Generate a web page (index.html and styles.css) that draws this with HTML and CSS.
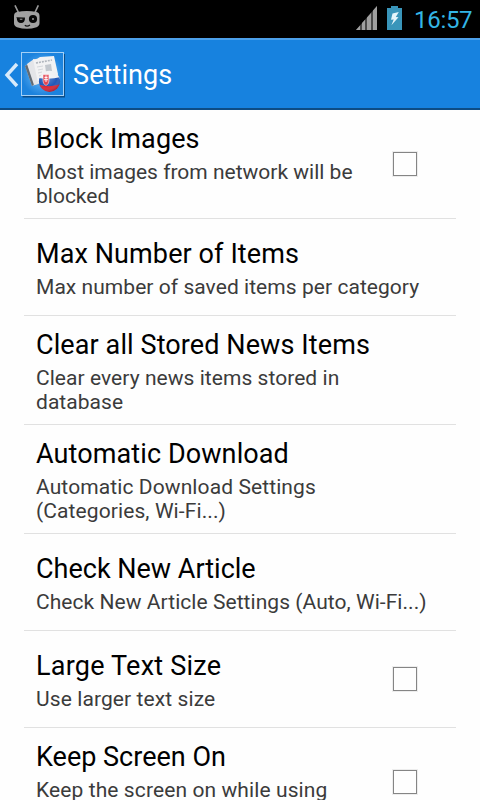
FILE: index.html
```html
<!DOCTYPE html>
<html lang="en">
<head>
<meta charset="utf-8">
<title>Settings</title>
<link rel="stylesheet" href="styles.css">
</head>
<body>
<div class="screen">
  <header class="status">
    <svg class="cid" width="28" height="26" viewBox="0 0 28 26">
      <path d="M2.3 1 5.2 7M25 1 22.2 7" stroke="#999" stroke-width="1.7" stroke-linecap="round"/>
      <path d="M4 7Q14 5 23.5 7Q26.5 7.5 26.5 11V18Q26.5 21 23.5 22.2Q14 25.5 4 22.2Q1 21 1 18V11Q1 7.5 4 7Z" fill="#a2a2a2"/>
      <path d="M3.8 13H12Q12 18 8 18Q3.8 18 3.8 13Z" fill="#080808"/>
      <path d="M3.5 12.6 12 13" stroke="#222" stroke-width="1"/>
      <path d="M6.8 14.3H9.4" stroke="#888" stroke-width="1.2"/>
      <circle cx="20" cy="14" r="4.1" fill="#080808"/>
      <circle cx="20" cy="14" r="1" fill="#999"/>
      <path d="M11.8 20.2Q14 22 17 20" stroke="#111" stroke-width="1.3" fill="none"/>
    </svg>
    <div class="indicators">
      <svg width="22" height="24" viewBox="0 0 22 24">
        <path d="M0 24 21 0V24Z" fill="#4a4a4a"/>
        <path d="M0 24 4 19.4V24ZM6 24V17.1L9 13.7V24ZM11 24V11.4L15 6.9V24ZM17 24V4.6L21 0V24Z" fill="#a0a0a0"/>
      </svg>
      <svg class="battery" width="16" height="24" viewBox="0 0 16 24">
        <path d="M0 2H4V0H11V2H15V24H0Z" fill="#3995ba"/>
        <path d="M5.5 7.5 11.8 6 8.8 11 11.5 11.3 4.4 19.3 6.7 13.5 4 13.7Z" fill="#e5f5fb"/>
      </svg>
      <span class="clock">16:57</span>
    </div>
  </header>
  <nav class="bar">
    <svg class="back" width="15" height="26" viewBox="0 0 15 26"><path d="M13 2 3 13 13 24" fill="none" stroke="#d7eafb" stroke-width="3.4"/></svg>
    <svg class="app" width="48" height="50" viewBox="0 0 48 50">
      <defs>
        <radialGradient id="glow"><stop offset="0" stop-color="#7fc4f8"/><stop offset="1" stop-color="#1c83de"/></radialGradient>
        <clipPath id="ball"><circle cx="29.5" cy="31.3" r="10.6"/></clipPath>
        <radialGradient id="shine" cx=".4" cy=".3" r=".75"><stop offset="0" stop-color="#fff" stop-opacity=".3"/><stop offset=".6" stop-color="#fff" stop-opacity="0"/><stop offset="1" stop-color="#003" stop-opacity=".35"/></radialGradient>
      </defs>
      <rect x="2.5" y="4" width="42.5" height="43.5" fill="#0c4d88"/>
      <rect x="1.5" y="2.5" width="42" height="43" fill="url(#glow)" stroke="#a4d0f6"/>
      <path d="M5 16 15 9 18 34 12 36Z" fill="#c4cbd2"/>
      <path d="M5 16 8.5 14 16 33 12 36Z" fill="#626b74"/>
      <path d="M7 14 14 9 22 33 14 35Z" fill="#e4e5e8"/>
      <path d="M13 9Q16 10 20 7L34 6 38 24 36 31 18 33Z" fill="#f2f2f3"/>
      <path d="M16 13 32 10" stroke="#b0b6bd" stroke-width="1.6" stroke-dasharray="2 1"/>
      <path d="M17 17 23 16M18 20 23 19M18 23 22 22M19 26 22 25" stroke="#d4d7db"/>
      <path d="M25 15 31 14 32 21 26 22Z" fill="#c2c7cd"/>
      <g clip-path="url(#ball)">
        <path d="M18 20H41V29H18Z" fill="#f0f0f3"/>
        <path d="M18 28Q30 30 41 27V34.5Q30 38 18 34.5Z" fill="#2058b8"/>
        <path d="M18 34.5Q30 38 41 34V43H18Z" fill="#db2431"/>
        <path d="M23 24.5H29V31Q29 34 26 35.5Q23 34 23 31Z" fill="#e03140" stroke="#fff" stroke-width=".5"/>
        <path d="M26 25.5V32M24.5 27.5H27.5M24 29.7H28" stroke="#fff" stroke-width=".9"/>
        <circle cx="29.5" cy="31.3" r="10.6" fill="url(#shine)"/>
      </g>
    </svg>
    <h1>Settings</h1>
  </nav>
  <main class="list">
    <section class="row tall"><div class="copy"><h2>Block Images</h2><p>Most images from network will be<br>blocked</p></div><span class="check"></span></section>
    <section class="row"><div class="copy"><h2>Max Number of Items</h2><p class="wide">Max number of saved items per category</p></div></section>
    <section class="row tall"><div class="copy"><h2>Clear all Stored News Items</h2><p class="wide">Clear every news items stored in<br>database</p></div></section>
    <section class="row tall"><div class="copy"><h2>Automatic Download</h2><p class="wider">Automatic Download Settings<br>(Categories, Wi-Fi...)</p></div></section>
    <section class="row"><div class="copy"><h2 class="plain">Check New Article</h2><p class="wide">Check New Article Settings (Auto, Wi-Fi...)</p></div></section>
    <section class="row"><div class="copy"><h2 class="loose">Large Text Size</h2><p class="wider">Use larger text size</p></div><span class="check"></span></section>
    <section class="row tall"><div class="copy"><h2 class="plain">Keep Screen On</h2><p class="wider">Keep the screen on while using<br>&nbsp;</p></div><span class="check"></span></section>
  </main>
</div>
</body>
</html>
```
FILE: styles.css
```css
* { box-sizing: border-box; }
body { margin: 0; background: #fefefe; font-family: Roboto, sans-serif; }
h1, h2, p { margin: 0; font-weight: 400; white-space: nowrap; }
svg { display: block; flex: none; }
.screen { width: 480px; height: 800px; overflow: hidden; }
.status { height: 38px; background: #000; display: flex; justify-content: space-between; padding: 5px 8px 0 13px; }
.indicators { display: flex; padding-top: 1px; }
.battery { margin-left: 9px; }
.clock { margin-left: 11px; width: 58px; font-size: 24px; line-height: 28px; letter-spacing: -0.3px; color: #33b5e5; white-space: nowrap; }
.bar { height: 72px; display: flex; align-items: center; padding: 1px 0 0 4px; background: #1782df; border-top: 2px solid #4ca0ea; border-bottom: 2px solid #0d4c84; }
.app { margin: 1px 0 0 1px; }
h1 { margin: 1px 0 0 5px; font-size: 27px; line-height: 32px; letter-spacing: 0.1px; color: #fff; }
.list { padding: 0 24px; }
.row { height: 97px; border-bottom: 1px solid #e1e1e1; padding: 0 39px 0 12px; display: flex; align-items: center; justify-content: space-between; }
.tall { height: 109px; }
.copy { padding-top: 2px; }
h2 { margin-bottom: 4px; font-size: 27px; line-height: 33px; letter-spacing: 0.1px; color: #000; }
h2.plain { letter-spacing: 0; }
h2.loose { letter-spacing: 0.22px; }
p { font-size: 21px; line-height: 24px; color: #3b3b3b; }
p.wide { letter-spacing: 0.05px; }
p.wider { letter-spacing: 0.1px; }
.check { flex: none; width: 24px; height: 24px; border: 1px solid #858585; outline: 1px solid #ededed; }
```
